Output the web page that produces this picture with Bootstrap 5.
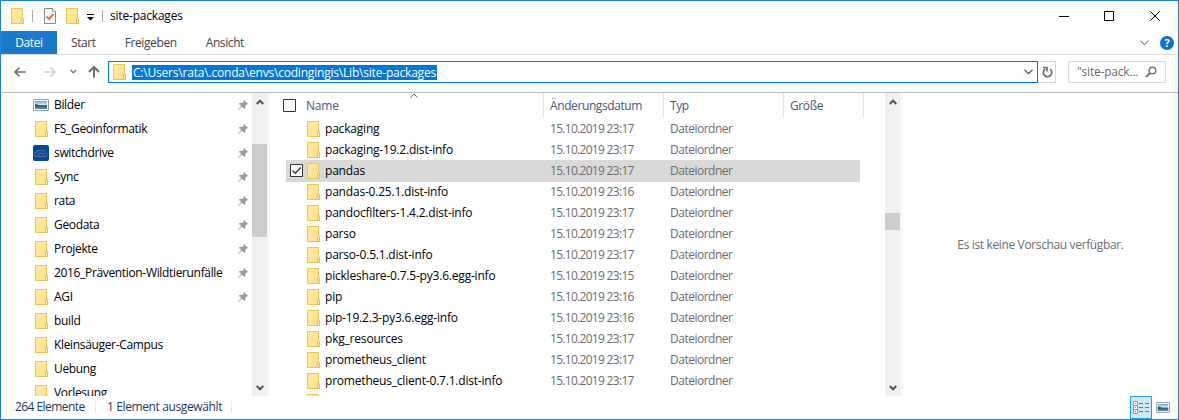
<!DOCTYPE html>
<html lang="de">
<head>
<meta charset="utf-8">
<meta name="viewport" content="width=device-width, initial-scale=1">
<title>site-packages</title>
<link href="https://cdn.jsdelivr.net/npm/bootstrap@5.3.0/dist/css/bootstrap.min.css" rel="stylesheet">
<style>
body{font-family:"Open Sans","Noto Sans",sans-serif;font-size:12px;line-height:16px;letter-spacing:-.2px;color:#000;background:#fff}
svg{display:block;flex:none}
.win{width:1179px;height:420px;border:1px solid #1883d7}
.titlebar{height:30px;padding-left:8px}
.tabs{height:24px;border-bottom:1px solid #dadbdc;color:#444;letter-spacing:-.4px}
.tab-on{width:56px;height:23px;background:#1979ca;color:#fff}
.addrbar{height:38px;padding:6px 10px 0 11px;border-bottom:1px solid #b9b9b9;margin-left:1px}
.addr{width:930px;height:22px;border:1px solid #0078d7;padding-left:4px}
.sel{background:#0078d7;color:#fff;height:15px;line-height:15px;padding:0 1px;margin-left:5px}
.refresh{width:18px;height:22px;border:1px solid #d9d9d9;border-left:0}
.search{width:98px;height:22px;border:1px solid #d9d9d9;margin-left:12px;color:#6d6d6d;padding:0 8px 0 8px}
.main{height:303px}
.side{width:251px;letter-spacing:-.34px}
.side-row{height:24px;padding-left:32px;padding-right:4px}
.side-row .label{margin-left:5px}
.sbar{width:16px;background:#f0f0f0}
.sbar .thumb{width:15px;background:#cdcdcd}
.files{width:616px;padding-left:16px}
.hdr{height:25px;color:#44587c;letter-spacing:-.4px}
.hdr .cell{height:25px;padding-left:6px;border-right:1px solid #e5e5e5;line-height:25px}
.c-date{width:120px}.c-type{width:120px}.c-size{width:80px}
.file-row{height:21px;width:574px;color:#6d6d6d}
.file-row.on{background:#d9d9d9;box-shadow:0 1px #d9d9d9}
.file-row .check{width:21px;padding-left:4px}
.file-row .fname{width:237px;color:#000}
.file-row .fname span{margin-left:4px}
.f-date{margin-left:8px;width:120px;letter-spacing:-.7px}
.f-type{letter-spacing:-.5px}
.preview{color:#6d6d6d;border-left:1px solid #f4f4f4;margin-left:1px;letter-spacing:-.36px}
.status{height:22px;color:#1e395b;padding-left:14px}
.t-s1{letter-spacing:-.55px;width:71px}
.t-s2{letter-spacing:-.38px;width:115px}
.vsep{width:1px;height:12px;background:#e8e8e8}
.view-on{width:22px;height:23px;border:1px solid #26a0da;background:#cbe8f6}
</style>
</head>
<body>
<svg width="0" height="0" class="position-absolute">
<defs>
<linearGradient id="fg" x2="1" y2="1"><stop offset="0" stop-color="#ffe9a2"/><stop offset="1" stop-color="#ffe28a"/></linearGradient>
<linearGradient id="sky" x2="0" y2="1"><stop offset="0" stop-color="#5aa0e6"/><stop offset=".45" stop-color="#dceefa"/><stop offset=".55" stop-color="#3d6e5c"/><stop offset="1" stop-color="#4d8fc0"/></linearGradient>
<symbol id="folder" viewBox="0 0 16 16"><path d="M2.500.5h11v10l1 .5v4.500h-12z" fill="url(#fg)" stroke="#ecc64f"/><path d="M12.500 15.500v-5q0-.8 1-.8t1 .8v5z" fill="#ffe8a0" stroke="#e6bd45" stroke-width=".9"/></symbol>
<symbol id="pic" viewBox="0 0 16 12"><path d="M.5.5h15v11H.5z" fill="#fff" stroke="#9a9da1"/><path d="M2 2h12v8H2z" fill="url(#sky)"/><path d="M2 5q3 0 5 1.500l7 .3v.8H2z" fill="#2f6350"/></symbol>
<symbol id="cloud" viewBox="0 0 16 16"><rect width="16" height="16" rx="2" fill="#04489a"/><path d="M3 11.500a2 2 0 0 1 .3-4 2.600 2.600 0 0 1 4-1.500 3 3 0 0 1 5 2 1.800 1.800 0 0 1 .4 3.500zM5 11q-.5-3 2.500-3t4 3" fill="none" stroke="#6e7c93" stroke-width=".8"/></symbol>
<symbol id="pin" viewBox="0 0 10 10"><path d="M6 0l4 4-1.200.4-1.600 1.800.1 2.300-.8.6L4 6.600 0.700 9.800 0 10l.2-.8L3.200 6 1 3.800l.6-.8 2.500.1L5.800 1.500z" fill="#8f9ba6"/></symbol>
<symbol id="up" viewBox="0 0 8 6"><path d="M.7 5L4 1.700 7.300 5" fill="none" stroke="#555" stroke-width="2"/></symbol>
<symbol id="down" viewBox="0 0 8 6"><path d="M.7 1L4 4.300 7.300 1" fill="none" stroke="#555" stroke-width="2"/></symbol>
</defs>
</svg>
<div class="win d-flex flex-column overflow-hidden">
  <div class="titlebar d-flex align-items-center">
    <svg width="16" height="16"><use href="#folder"/></svg>
    <div style="width:1px;height:12px;background:#aaa;margin-left:7px"></div>
    <svg width="12" height="16" viewBox="0 0 12 16" style="margin-left:11px"><path d="M.5.5h8l3 3v12H.5z" fill="#f7f7f7" stroke="#8b8b8b"/><path d="M8.500.5v3h3" fill="#fff" stroke="#8b8b8b" stroke-width=".8"/><path d="M2.500 8.500l2.500 2.500 4.500-5" fill="none" stroke="#f05a28" stroke-width="1.700"/></svg>
    <svg width="16" height="16" style="margin-left:8px"><use href="#folder"/></svg>
    <svg width="7" height="8" viewBox="0 0 7 8" style="margin-left:7px;margin-top:1px"><path d="M0 1.500h7" stroke="#000"/><path d="M0 4h7L3.500 7.500z"/></svg>
    <div style="width:1px;height:12px;background:#aaa;margin-left:8px"></div>
    <span style="margin-left:7px">site-packages</span>
    <svg class="ms-auto" width="102" height="10" viewBox="0 0 102 10" fill="none" stroke="#000" style="margin-right:17px"><path d="M0 5.500h10M45.500.5h9v9h-9zM91.500.5l9 9m0-9l-9 9"/></svg>
  </div>
  <div class="tabs d-flex align-items-center">
    <div class="tab-on d-flex align-items-center justify-content-center">Datei</div>
    <span style="margin-left:14px">Start</span><span style="margin-left:29px">Freigeben</span><span style="margin-left:29px">Ansicht</span>
    <svg class="ms-auto" width="9" height="6" viewBox="0 0 9 6" fill="none" stroke="#9a9a9a" stroke-width="1.300"><path d="M.5.7l4 4 4-4"/></svg>
    <svg width="14" height="14" viewBox="0 0 14 14" style="margin-left:11px;margin-right:4px"><circle cx="7" cy="7" r="7" fill="#0c6fcb"/><text x="7" y="11" text-anchor="middle" font-size="11" font-weight="700" fill="#fff" letter-spacing="0">?</text></svg>
  </div>
  <div class="addrbar d-flex">
    <svg width="95" height="22" viewBox="0 0 95 22" fill="none" stroke-width="1.700"><path d="M13 11H2M6.500 6.500L2 11 6.500 15.500" stroke="#6e6e6e"/><path d="M31 11h11M37.500 6.500L42 11l-4.500 4.500" stroke="#d0d0d0"/><path d="M57.500 9l2.800 2.800L63.100 9" stroke="#777" stroke-width="1.500"/><path d="M81 16.500V6M76 11l5-5 5 5" stroke="#6e6e6e" stroke-width="2"/></svg>
    <div class="addr d-flex align-items-center">
      <svg width="16" height="16" style="margin-left:-2px"><use href="#folder"/></svg>
      <span class="sel">C:\Users\rata\.conda\envs\codingingis\Lib\site-packages</span>
      <svg class="ms-auto" width="9" height="6" viewBox="0 0 9 6" fill="none" stroke="#555" stroke-width="1.300" style="margin-right:4px"><path d="M.5.7l4 4 4-4"/></svg>
    </div>
    <div class="refresh d-flex align-items-center justify-content-center"><svg width="11" height="12" viewBox="0 0 11 12" fill="none" stroke="#6d6d6d" stroke-width="1.700" style="margin-left:2px"><path d="M8.200 3.200A4.200 4.200 0 1 1 3.200 3M1 1.500h4v4"/></svg></div>
    <div class="search d-flex align-items-center"><span>"site-pack...</span><svg class="ms-auto" width="12" height="12" viewBox="0 0 12 12" fill="none" stroke="#777" stroke-width="1.500"><circle cx="7.500" cy="4.500" r="3.300"/><path d="M5 7L1 11" stroke-width="2"/></svg></div>
  </div>
  <div class="main d-flex overflow-hidden">
    <div class="side overflow-hidden" id="side"></div>
    <div class="sbar d-flex flex-column align-items-start">
      <svg width="8" height="6" style="margin:6px 0 0 4px"><use href="#up"/></svg>
      <div class="thumb" style="height:93px;margin-top:39px"></div>
      <svg class="mt-auto" width="8" height="6" style="margin:0 0 5px 4px"><use href="#down"/></svg>
    </div>
    <div class="files overflow-hidden position-relative" style="border-left:1px solid #f4f4f4;margin-left:1px">
      <svg class="position-absolute" style="left:140px;top:0" width="8" height="5" viewBox="0 0 8 5" fill="none" stroke="#666"><path d="M.5 4.500L4 1l3.500 3.500"/></svg>
      <div class="hdr d-flex">
        <div class="d-flex" style="width:258px;border-right:1px solid #e5e5e5"><svg width="13" height="13" style="margin:6px 0 0 -3px"><path d="M.5.5h12v12H.5z" fill="#fff" stroke="#333"/></svg><span style="margin-left:10px;line-height:25px;letter-spacing:-.2px">Name</span></div>
        <div class="cell c-date">Änderungsdatum</div><div class="cell c-type">Typ</div><div class="cell c-size">Größe</div>
      </div>
      <div id="rows"></div>
    </div>
    <div class="sbar d-flex flex-column align-items-start ms-0">
      <svg width="8" height="6" style="margin:6px 0 0 4px"><use href="#up"/></svg>
      <div class="thumb" style="height:17px;margin-top:108px"></div>
      <svg class="mt-auto" width="8" height="6" style="margin:0 0 5px 4px"><use href="#down"/></svg>
    </div>
    <div class="preview flex-fill d-flex align-items-center justify-content-center"><span>Es ist keine Vorschau verfügbar.</span></div>
  </div>
  <div class="status d-flex align-items-center">
    <span class="t-s1 text-nowrap">264 Elemente</span><div class="vsep" style="margin-left:9px"></div><span class="t-s2 text-nowrap" style="margin-left:11px">1 Element ausgewählt</span><div class="vsep" style="margin-left:9px"></div>
    <div class="view-on ms-auto d-flex align-items-center justify-content-center"><svg width="16" height="13" viewBox="0 0 16 13" fill="none"><path d="M.5.5h4v4h-4zM.5 4.500h4v4h-4zM.5 8.500h4v4h-4z" fill="#fff" stroke="#8f9499"/><path d="M6 2.500h4m2 0h4M6 6.500h4m2 0h4M6 10.500h4m2 0h4" stroke="#6b7680"/><path d="M2 2h1v1H2z" fill="#4a7"/><path d="M2 6h1v1H2z" fill="#48f"/><path d="M2 10h1v1H2z" fill="#c33"/></svg></div>
    <svg width="14" height="11" viewBox="0 0 16 12" preserveAspectRatio="none" style="margin:0 8px 0 4px"><use href="#pic"/></svg>
  </div>
</div>
<script>
const side=[["Bilder","pic"],["FS_Geoinformatik"],["switchdrive","cloud"],["Sync"],["rata"],["Geodata"],["Projekte"],["2016_Prävention-Wildtierunfälle"],["AGI"],["build"],["Kleinsäuger-Campus"],["Uebung"],["Vorlesung"]];
document.getElementById("side").innerHTML=side.map(([n,i],k)=>`<div class="side-row d-flex align-items-center"><svg width="16" height="${i=="pic"?12:16}"><use href="#${i||"folder"}"/></svg><span class="label text-nowrap">${n}</span>${k<9?'<svg class="ms-auto" width="10" height="10"><use href="#pin"/></svg>':""}</div>`).join("");
const files=[["packaging",17],["packaging-19.2.dist-info",17],["pandas",17],["pandas-0.25.1.dist-info",16],["pandocfilters-1.4.2.dist-info",17],["parso",17],["parso-0.5.1.dist-info",17],["pickleshare-0.7.5-py3.6.egg-info",15],["pip",16],["pip-19.2.3-py3.6.egg-info",16],["pkg_resources",17],["prometheus_client",17],["prometheus_client-0.7.1.dist-info",17],["",0]];
const check='<svg width="13" height="13" viewBox="0 0 13 13"><path d="M.5.5h12v12H.5z" fill="#fff" stroke="#333"/><path d="M2.500 6.500l2.800 2.800L10.700 3.500" fill="none" stroke="#333" stroke-width="1.300"/></svg>';
document.getElementById("rows").innerHTML=files.map(([n,m],k)=>`<div class="file-row d-flex align-items-center ${k==2?"on":""}"><div class="check">${k==2?check:""}</div><div class="fname d-flex align-items-center" style="margin-left:-2px"><svg width="16" height="16"><use href="#folder"/></svg><span>${n}</span></div>${m?`<span class="f-date">15.10.2019 23:${m}</span><span class="f-type">Dateiordner</span>`:""}</div>`).join("");
</script>
<script src="https://cdn.jsdelivr.net/npm/bootstrap@5.3.0/dist/js/bootstrap.bundle.min.js"></script>
</body>
</html>
